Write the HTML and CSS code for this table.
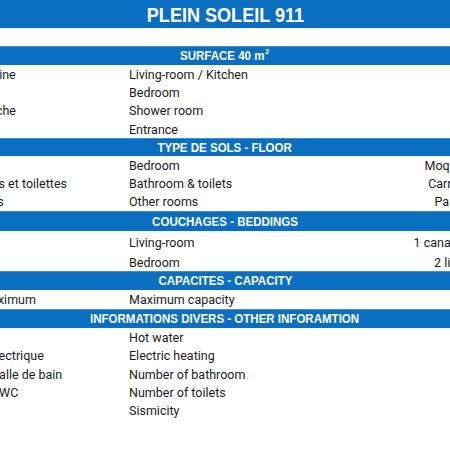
FILE: index.html
```html
<!DOCTYPE html>
<html lang="fr">
<head>
<meta charset="utf-8">
<title>Plein Soleil 911</title>
<link rel="stylesheet" href="styles.css">
</head>
<body>
<div class="sheet">
  <div class="title"><span class="narrow">PLEIN SOLEIL 911</span></div>
  <div class="gap"></div>

  <div class="sec"><span class="narrow">SURFACE 40 m<sup>2</sup></span></div>
  <div class="row"><span class="fr">Séjour / Cuisine</span><span class="en">Living-room / Kitchen</span><span class="val"></span></div>
  <div class="row"><span class="fr">Chambre</span><span class="en">Bedroom</span><span class="val"></span></div>
  <div class="row"><span class="fr">Salle de douche</span><span class="en">Shower room</span><span class="val"></span></div>
  <div class="row"><span class="fr">Entrée</span><span class="en">Entrance</span><span class="val"></span></div>

  <div class="sec sec-s"><span class="narrow">TYPE DE SOLS - FLOOR</span></div>
  <div class="row"><span class="fr">Chambre</span><span class="en">Bedroom</span><span class="val">Moquette</span></div>
  <div class="row"><span class="fr">Salle de bains et toilettes</span><span class="en">Bathroom &amp; toilets</span><span class="val">Carreaux</span></div>
  <div class="row"><span class="fr">Autres pièces</span><span class="en">Other rooms</span><span class="val">Parquet</span></div>

  <div class="sec sec-l"><span class="narrow">COUCHAGES - BEDDINGS</span></div>
  <div class="row row-tall"><span class="fr">Séjour</span><span class="en">Living-room</span><span class="val">1 canapé-lit</span></div>
  <div class="row"><span class="fr">Chambre</span><span class="en">Bedroom</span><span class="val">2 lits 90</span></div>

  <div class="sec"><span class="narrow">CAPACITES - CAPACITY</span></div>
  <div class="row row-m"><span class="fr">Capacité maximum</span><span class="en">Maximum capacity</span><span class="val"></span></div>

  <div class="sec"><span class="narrow">INFORMATIONS DIVERS - OTHER INFORAMTION</span></div>
  <div class="row"><span class="fr">Eau chaude</span><span class="en">Hot water</span><span class="val"></span></div>
  <div class="row"><span class="fr">Chauffage électrique</span><span class="en">Electric heating</span><span class="val"></span></div>
  <div class="row"><span class="fr">Nombre de salle de bain</span><span class="en">Number of bathroom</span><span class="val"></span></div>
  <div class="row"><span class="fr">Nombre des WC</span><span class="en">Number of toilets</span><span class="val"></span></div>
  <div class="row"><span class="fr">Sismicité</span><span class="en">Sismicity</span><span class="val"></span></div>
</div>
</body>
</html>
```

FILE: styles.css
```css
html, body {
  margin: 0;
  padding: 0;
  background: #ffffff;
  overflow: hidden;
}

body {
  font-family: Roboto, "Noto Sans", sans-serif;
  color: #1c1c1c;
}

.sheet {
  width: 670px;
  margin-left: -110px;
}

.title {
  height: 28px;
  background: #0b6fc1;
  color: #ffffff;
  font-family: "Liberation Sans", Arial, sans-serif;
  font-weight: bold;
  font-size: 21px;
  display: flex;
  align-items: center;
  justify-content: center;
  box-sizing: border-box;
  padding-top: 2px;
}

.narrow {
  display: inline-block;
  transform: scaleX(0.86);
  white-space: nowrap;
}

.gap {
  height: 18px;
}

.sec {
  height: 19px;
  background: #0b6fc1;
  color: #ffffff;
  font-family: "Liberation Sans", Arial, sans-serif;
  font-weight: bold;
  font-size: 12.8px;
  display: flex;
  align-items: center;
  justify-content: center;
  box-shadow: inset 0 1px 0 #3d8fd2;
}

.sec .narrow {
  transform: scaleX(0.9);
}

.sec sup {
  font-size: 8px;
  line-height: 0;
  position: relative;
  top: -1px;
  margin-left: 1px;
}

.sec-s {
  height: 18px;
}

.sec-l {
  height: 20px;
}

.row {
  display: grid;
  grid-template-columns: 239px 1fr 200px;
  height: 18.3px;
  align-items: center;
  font-size: 12.5px;
  white-space: nowrap;
}

.row-tall {
  height: 22px;
}

.row-m {
  height: 19px;
}

.fr {
  padding-left: 38px;
}

.val {
  text-align: right;
  padding-right: 82px;
}
```
